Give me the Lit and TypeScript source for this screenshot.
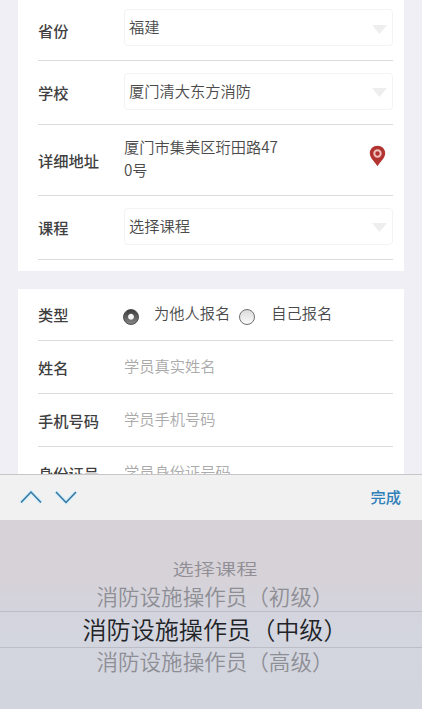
import { LitElement, html, css, svg } from "lit";
import { customElement, property } from "lit/decorators.js";

@customElement("form-row")
class FormRow extends LitElement {
  @property() label = "";

  static styles = css`
    :host {
      display: flex;
      box-sizing: border-box;
      margin: 0 11px 0 20px;
      border-bottom: 1px solid #dcdcde;
    }
    .label {
      width: 86px;
      flex: none;
      align-self: center;
      margin-bottom: 1px;
      font-size: 15.25px;
      line-height: 22px;
      font-weight: 500;
      color: #3f3f3f;
      white-space: nowrap;
    }
    .value {
      flex: 1;
      min-width: 0;
      display: flex;
      align-items: center;
    }
  `;

  render() {
    return html`<div class="label">${this.label}</div>
      <div class="value"><slot></slot></div>`;
  }
}

@customElement("select-box")
class SelectBox extends LitElement {
  @property() value = "";

  static styles = css`
    :host {
      flex: 1;
      display: flex;
      align-items: center;
      justify-content: space-between;
      box-sizing: border-box;
      height: 37px;
      margin-bottom: 3px;
      padding: 0 5px 0 4px;
      border: 1px solid #f3f3f3;
      border-radius: 4px;
      color: #4a4a4a;
      font-size: 15.25px;
      line-height: 22px;
    }
    .text {
      margin-bottom: 3px;
    }
    .arrow {
      display: block;
      margin-top: 3px;
    }
  `;

  render() {
    return html`<span class="text">${this.value}</span>
      <svg class="arrow" width="15" height="9" viewBox="0 0 15 9">
        <path d="M0 0H15L7.5 9Z" fill="#eeeeee" />
      </svg>`;
  }
}

const options = [
  { text: "选择课程", kind: "far" },
  { text: "消防设施操作员（初级）", kind: "near" },
  { text: "消防设施操作员（中级）", kind: "current" },
  { text: "消防设施操作员（高级）", kind: "near last" },
];

const chevron = (d: string) => svg`
  <path d=${d} fill="none" stroke="#c9ecfb" stroke-width="3.4" />
  <path d=${d} fill="none" stroke="#38759f" stroke-width="1.5" />`;

@customElement("app-root")
class AppRoot extends LitElement {
  static styles = css`
    :host {
      display: flex;
      flex-direction: column;
      height: 709px;
      overflow: hidden;
      background: #f0eff5;
      font-family: "Noto Sans CJK SC", sans-serif;
      font-weight: 350;
      font-size: 15.25px;
      line-height: 22px;
      color: #4a4a4a;
    }
    .page {
      height: 474px;
      flex: none;
      overflow: hidden;
    }
    .card {
      margin: 0 18px;
      background: #fff;
    }
    .first {
      height: 271px;
      margin-bottom: 18px;
    }
    .second {
      height: 240px;
    }
    .h61 { height: 61px; }
    .h61 select-box { margin-bottom: 5px; }
    .h64 { height: 64px; }
    .h71 { height: 71px; }
    .h52 { height: 52px; }
    .h53 { height: 53px; }
    .address {
      width: 160px;
      line-height: 23px;
      margin: 0 0 4px;
      word-break: break-all;
    }
    .pin {
      display: block;
      margin: 0 7px 8px auto;
    }
    .radio {
      box-sizing: border-box;
      width: 16px;
      height: 16px;
      flex: none;
      margin-top: 5px;
      border: 1px solid #6f6f6f;
      border-radius: 50%;
      background: linear-gradient(#dcdcdc, #fafafa);
    }
    .radio.on {
      margin-left: -1px;
      border-color: #4a4a4a;
      background: radial-gradient(circle at 50% 48%, #f4f4f4 0 2.4px, transparent 3.4px),
        linear-gradient(#3c3c3c, #858585);
    }
    .choice {
      margin: 0 9px 5px 15px;
    }
    .choice.self {
      margin-left: 16px;
    }
    .placeholder {
      color: #aaa;
      margin-bottom: 5px;
    }
    .bar {
      box-sizing: border-box;
      height: 46px;
      flex: none;
      display: flex;
      align-items: center;
      justify-content: space-between;
      padding: 0 21px 0 20px;
      background: #f1f1f1;
      border-top: 1px solid #c6c6c8;
    }
    .arrows {
      display: block;
      margin-bottom: 2px;
    }
    .done {
      margin-bottom: 3px;
      color: #2f80b8;
      font-weight: 500;
    }
    .picker {
      flex: 1;
      display: flex;
      flex-direction: column;
      align-items: center;
      box-sizing: border-box;
      padding-top: 36px;
      background: linear-gradient(#d6d2d8 0, #d6d2d8 30%, #d3d5df 58%, #d2d5de 100%);
    }
    .option {
      box-sizing: border-box;
      width: 100%;
      padding-left: 8px;
      text-align: center;
      white-space: nowrap;
    }
    .far {
      height: 24px;
      line-height: 24px;
      font-size: 21.2px;
      color: #918f95;
    }
    .far span {
      display: inline-block;
      transform: scaleY(0.75);
    }
    .near {
      height: 31px;
      line-height: 31px;
      font-size: 21.55px;
      color: #8e8e95;
    }
    .near.last {
      line-height: 26px;
    }
    .current {
      height: 37px;
      line-height: 33px;
      border: solid #bcbdc6;
      border-width: 1px 0;
      font-size: 24.1px;
      color: #222326;
    }
  `;

  render() {
    return html`
      <div class="page">
        <div class="card first">
          <form-row class="h61" label="省份"><select-box value="福建"></select-box></form-row>
          <form-row class="h64" label="学校"><select-box value="厦门清大东方消防"></select-box></form-row>
          <form-row class="h71" label="详细地址">
            <p class="address">厦门市集美区珩田路470号</p>
            <svg class="pin" width="17" height="22" viewBox="0 0 17 22">
              <path
                d="M8.5 21.3C6.8 17.8 .8 13.2 .8 8.2C.8 3.9 4.2.8 8.5.8S16.2 3.9 16.2 8.2C16.2 13.2 10.2 17.8 8.5 21.3Z"
                fill="#b23431"
              />
              <circle cx="8.5" cy="8.5" r="3.2" fill="#b23431" stroke="#f1c3bd" stroke-width="2" />
            </svg>
          </form-row>
          <form-row class="h64" label="课程"><select-box value="选择课程"></select-box></form-row>
        </div>
        <div class="card second">
          <form-row class="h52" label="类型">
            <i class="radio on"></i><span class="choice">为他人报名</span>
            <i class="radio"></i><span class="choice self">自己报名</span>
          </form-row>
          <form-row class="h53" label="姓名"><span class="placeholder">学员真实姓名</span></form-row>
          <form-row class="h53" label="手机号码"><span class="placeholder">学员手机号码</span></form-row>
          <form-row class="h53" label="身份证号"><span class="placeholder">学员身份证号码</span></form-row>
        </div>
      </div>
      <div class="bar">
        <svg class="arrows" width="58" height="16" viewBox="0 0 58 16">
          ${chevron("M1 13.5L11 3L21 13.5")}
          ${chevron("M36 3L46 13.5L56 3")}
        </svg>
        <span class="done">完成</span>
      </div>
      <div class="picker">
        ${options.map((o) => html`<div class="option ${o.kind}"><span>${o.text}</span></div>`)}
      </div>
    `;
  }
}
